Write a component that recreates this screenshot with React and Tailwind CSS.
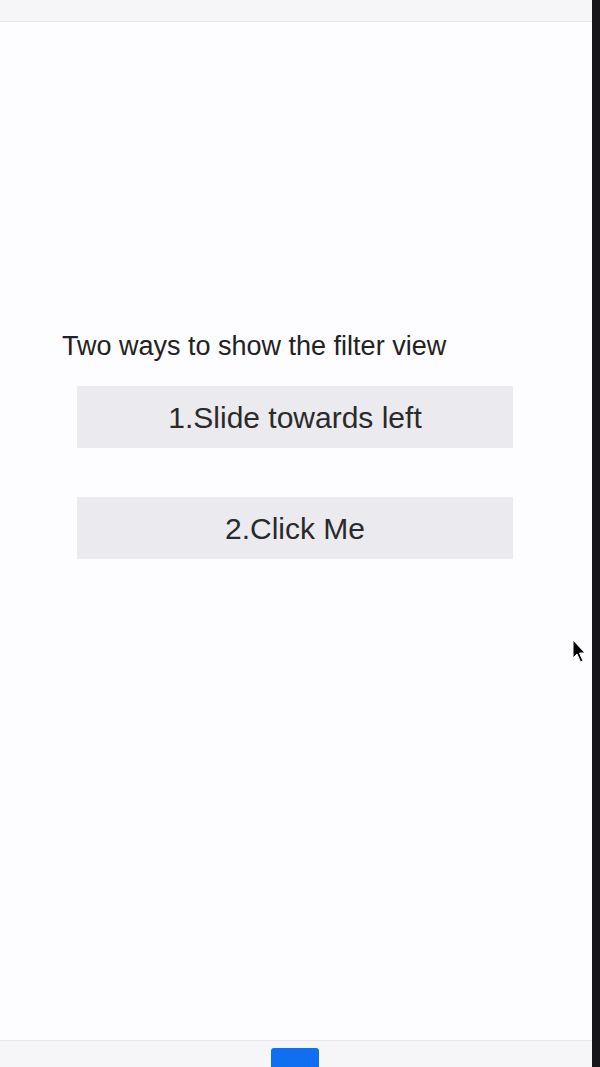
import React from 'react';

// Экран с двумя способами открыть фильтр
export default function App() {
  return (
    <div className="relative flex h-[1067px] w-[600px] overflow-hidden bg-[#fdfcfe]" style={{ fontFamily: '"Liberation Sans", Arial, sans-serif' }}>
      <div className="flex flex-1 flex-col">
        {/* Верхняя панель */}
        <div className="h-[22px] shrink-0 border-b border-[#e6e5e9] bg-[#f6f5f7]" />

        {/* Контент */}
        <div className="flex flex-1 flex-col pt-[308px]">
          <p className="pl-[62px] text-[27px] leading-[32px] text-[#222]">Two ways to show the filter view</p>
          <div className="mt-[24px] flex flex-col gap-[49px] pl-[77px]">
            <button className="h-[62px] w-[436px] bg-[#ebeaef] text-[30px] text-[#2a2a2a]">1.Slide towards left</button>
            <button className="h-[62px] w-[436px] bg-[#ebeaef] text-[30px] text-[#2a2a2a]">2.Click Me</button>
          </div>
        </div>

        {/* Нижняя панель */}
        <div className="flex h-[27px] shrink-0 justify-start border-t border-[#e6e5e9] bg-[#f6f5f7] pl-[271px] pt-[7px]">
          <div className="h-[24px] w-[48px] rounded-[3px] bg-[#0f6ff0]" />
        </div>
      </div>

      {/* Правая тёмная кромка */}
      <div className="w-[8px] shrink-0 bg-[#17161b]" />

      {/* Курсор */}
      <svg className="absolute left-[572px] top-[639px]" width="16" height="26" viewBox="0 0 16 26">
        <path d="M1 1 L1 19 L5 15 L8.5 23 L11 22 L7.5 14 L13 14 Z" fill="#000" stroke="#fff" strokeWidth="1" />
      </svg>
    </div>
  );
}
